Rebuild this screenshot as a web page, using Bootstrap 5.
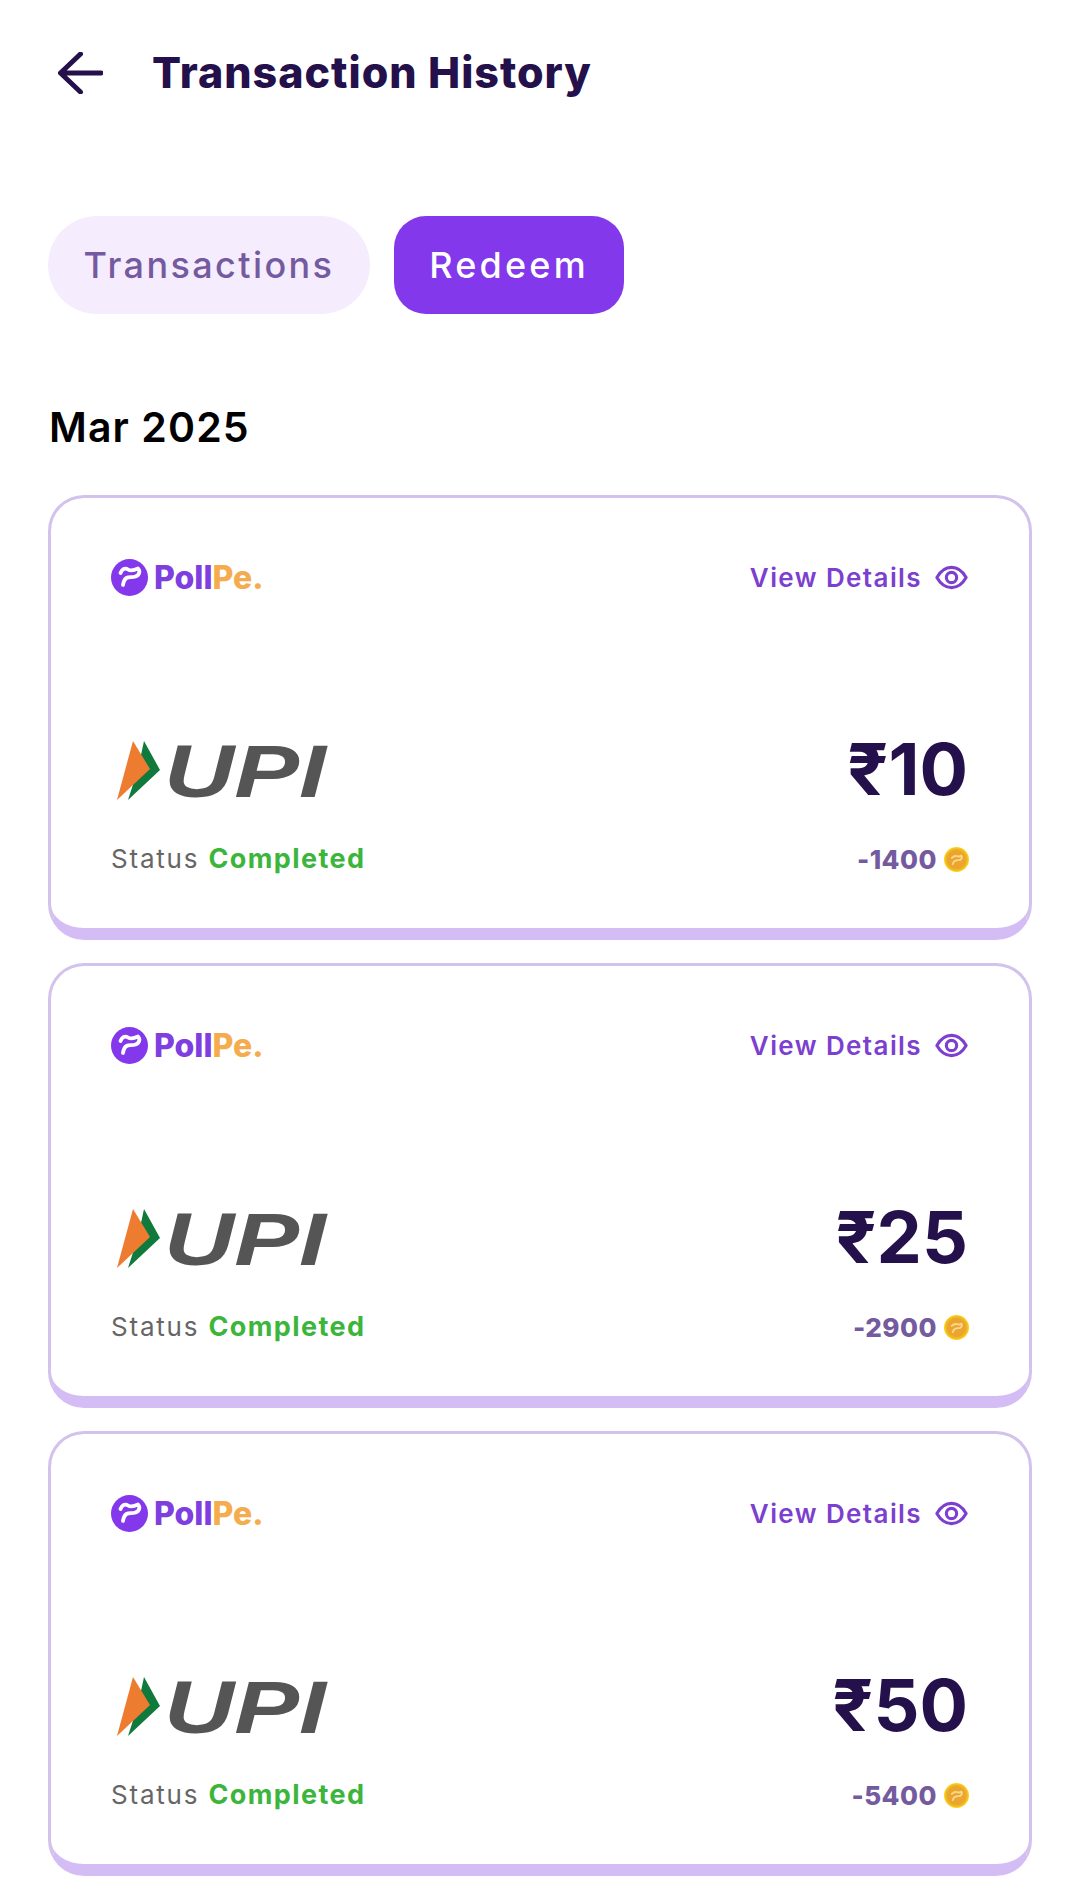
<!DOCTYPE html>
<html>
<head>
  <title>Transaction History</title>
  <link href="https://cdn.jsdelivr.net/npm/bootstrap@5.3.3/dist/css/bootstrap.min.css" rel="stylesheet">
  <style>
    body { font-family: Inter, "Liberation Sans", sans-serif; background: #fff; }
    .page-wrap { padding: 0 48px; }
    .top-bar { height: 146px; padding-left: 10px; gap: 49px; }
    .back-icon { width: 45px; height: 42px; margin-top: -1px; }
    .page-title { font-size: 43px; font-weight: 800; color: #24104a; letter-spacing: 1px; margin: 0; }
    .tab-row { margin-top: 70px; gap: 24px; }
    .tab-btn { height: 98px; font-size: 36px; font-weight: 500; letter-spacing: 2.4px; border: 0; padding: 0; }
    .tab-light { width: 322px; background: #f5ecfd; color: #745a9e; border-radius: 49px; }
    .tab-active { width: 230px; background: #8338ec; color: #fff; border-radius: 32px; letter-spacing: 3.2px; }
    .month-label { font-size: 41px; font-weight: 600; color: #000; line-height: 1; letter-spacing: 1.1px; margin: 93px 0 47px 1px; }
    .txn-card { height: 445px; margin-bottom: 23px; border: 3px solid #d2c2ec; border-bottom: 12px solid #d4bdf5; border-radius: 36px; padding: 0 61px 0 60px; }
    .poll-logo { height: 37px; gap: 6px; }
    .poll-logo svg { width: 37px; height: 37px; }
    .poll-name { font-size: 32px; font-weight: 800; color: #7f3ee0; line-height: 1; letter-spacing: 0; }
    .poll-name span { color: #f4ac4e; }
    .view-link { font-size: 26px; font-weight: 600; color: #7c3fcf; letter-spacing: 1.4px; gap: 13px; text-decoration: none; }
    .view-link svg { width: 33px; height: 25px; }
    .card-head { padding-top: 60px; }
    .card-mid { margin-top: 136px; height: 72px; }
    .upi-logo { width: 218px; height: 86px; margin-left: 5px; margin-top: 2px; flex-shrink: 0; }
    .amount-text { font-size: 72px; font-weight: 700; color: #24104a; line-height: 1; }
    .card-foot { margin-top: 34px; }
    .status-text { font-size: 26px; color: #666; letter-spacing: 1.8px; }
    .status-text b { color: #3cb53c; font-size: 27px; font-weight: 700; letter-spacing: 1.4px; }
    .coin-text { font-size: 26px; font-weight: 800; color: #745a9e; gap: 7px; letter-spacing: .5px; }
    .coin-text svg { width: 25px; height: 25px; margin-right: -1px; }
  </style>
</head>
<body>
  <svg width="0" height="0" class="position-absolute">
    <defs>
      <radialGradient id="coinFill" cx="50%" cy="50%" r="50%">
        <stop offset="0" stop-color="#eda532"/>
        <stop offset=".7" stop-color="#eba42c"/>
        <stop offset=".86" stop-color="#f3bb22"/>
        <stop offset="1" stop-color="#fad916"/>
      </radialGradient>
    </defs>
    <symbol id="pollMark" viewBox="0 0 37 37">
      <circle cx="18.5" cy="18.5" r="18.5" fill="#8338ec"/>
      <path d="M9.500 14c1.500-4 4.500-5.500 7.500-3.500s7 .5 10-1c2.500 2.500 1.500 6.500-2.500 8-3.500 1.300-6.500 0-9 1.500-2 1.200-3 4-3.500 7" fill="none" stroke="#fff" stroke-width="3.800" stroke-linecap="round" stroke-linejoin="round"/>
    </symbol>
    <symbol id="eyeMark" viewBox="0 0 32 24">
      <path d="M1.800 12C5.500 5.500 10.500 2.200 16 2.200S26.500 5.500 30.200 12C26.500 18.500 21.500 21.800 16 21.800S5.500 18.500 1.800 12Z" fill="none" stroke="#7c3fcf" stroke-width="3" stroke-linejoin="round"/>
      <circle cx="16" cy="12" r="5" fill="none" stroke="#7c3fcf" stroke-width="3"/>
    </symbol>
    <symbol id="coinMark" viewBox="0 0 24 24">
      <circle cx="12" cy="12" r="12" fill="url(#coinFill)"/>
      <path d="M7.500 10.500c1.800-1.800 3.300-2.300 5-1.700 1.500.5 3 .3 4.300-.5.800 1.700.2 3.300-1.300 4-1.500.6-3 .1-4.500.7-1.300.5-2.200 1.800-2.700 3.500" fill="none" stroke="#f8d98a" stroke-width="1.800" stroke-linecap="round" stroke-linejoin="round"/>
    </symbol>
    <symbol id="upiFlag" viewBox="0 0 50 62">
      <polygon points="28,2 44,31 12,61 22,30" fill="#0f7a3c"/>
      <polygon points="17,2 34,30 1,61" fill="#ed7b30"/>
    </symbol>
  </svg>

  <div class="page-wrap">
    <div class="top-bar d-flex align-items-center">
      <svg class="back-icon" viewBox="0 0 45 42">
        <path d="M43 21H3M22.500 2 2.500 21l20 19" fill="none" stroke="#24104a" stroke-width="5" stroke-linecap="round"/>
      </svg>
      <h1 class="page-title">Transaction History</h1>
    </div>

    <div class="tab-row d-flex">
      <button class="tab-btn tab-light">Transactions</button>
      <button class="tab-btn tab-active">Redeem</button>
    </div>

    <div class="month-label">Mar 2025</div>

    <div class="txn-card bg-white">
      <div class="card-head d-flex justify-content-between align-items-center">
        <div class="poll-logo d-flex align-items-center">
          <svg><use href="#pollMark"/></svg>
          <div class="poll-name">Poll<span>Pe.</span></div>
        </div>
        <a class="view-link d-flex align-items-center" href="#">View Details <svg><use href="#eyeMark"/></svg></a>
      </div>
      <div class="card-mid d-flex justify-content-between align-items-center">
        <svg class="upi-logo" viewBox="0 -12 218 86">
          <use href="#upiFlag" width="50" height="62"/>
          <text x="48" y="58" font-family="Liberation Sans, sans-serif" font-size="75" font-weight="700" font-style="italic" fill="#555" textLength="162" lengthAdjust="spacingAndGlyphs">UPI</text>
        </svg>
        <div class="amount-text">₹10</div>
      </div>
      <div class="card-foot d-flex justify-content-between align-items-center">
        <div class="status-text">Status <b>Completed</b></div>
        <div class="coin-text d-flex align-items-center">-1400 <svg><use href="#coinMark"/></svg></div>
      </div>
    </div>

    <div class="txn-card bg-white">
      <div class="card-head d-flex justify-content-between align-items-center">
        <div class="poll-logo d-flex align-items-center">
          <svg><use href="#pollMark"/></svg>
          <div class="poll-name">Poll<span>Pe.</span></div>
        </div>
        <a class="view-link d-flex align-items-center" href="#">View Details <svg><use href="#eyeMark"/></svg></a>
      </div>
      <div class="card-mid d-flex justify-content-between align-items-center">
        <svg class="upi-logo" viewBox="0 -12 218 86">
          <use href="#upiFlag" width="50" height="62"/>
          <text x="48" y="58" font-family="Liberation Sans, sans-serif" font-size="75" font-weight="700" font-style="italic" fill="#555" textLength="162" lengthAdjust="spacingAndGlyphs">UPI</text>
        </svg>
        <div class="amount-text">₹25</div>
      </div>
      <div class="card-foot d-flex justify-content-between align-items-center">
        <div class="status-text">Status <b>Completed</b></div>
        <div class="coin-text d-flex align-items-center">-2900 <svg><use href="#coinMark"/></svg></div>
      </div>
    </div>

    <div class="txn-card bg-white">
      <div class="card-head d-flex justify-content-between align-items-center">
        <div class="poll-logo d-flex align-items-center">
          <svg><use href="#pollMark"/></svg>
          <div class="poll-name">Poll<span>Pe.</span></div>
        </div>
        <a class="view-link d-flex align-items-center" href="#">View Details <svg><use href="#eyeMark"/></svg></a>
      </div>
      <div class="card-mid d-flex justify-content-between align-items-center">
        <svg class="upi-logo" viewBox="0 -12 218 86">
          <use href="#upiFlag" width="50" height="62"/>
          <text x="48" y="58" font-family="Liberation Sans, sans-serif" font-size="75" font-weight="700" font-style="italic" fill="#555" textLength="162" lengthAdjust="spacingAndGlyphs">UPI</text>
        </svg>
        <div class="amount-text">₹50</div>
      </div>
      <div class="card-foot d-flex justify-content-between align-items-center">
        <div class="status-text">Status <b>Completed</b></div>
        <div class="coin-text d-flex align-items-center">-5400 <svg><use href="#coinMark"/></svg></div>
      </div>
    </div>
  </div>

  <script src="https://cdn.jsdelivr.net/npm/bootstrap@5.3.3/dist/js/bootstrap.bundle.min.js"></script>
</body>
</html>
